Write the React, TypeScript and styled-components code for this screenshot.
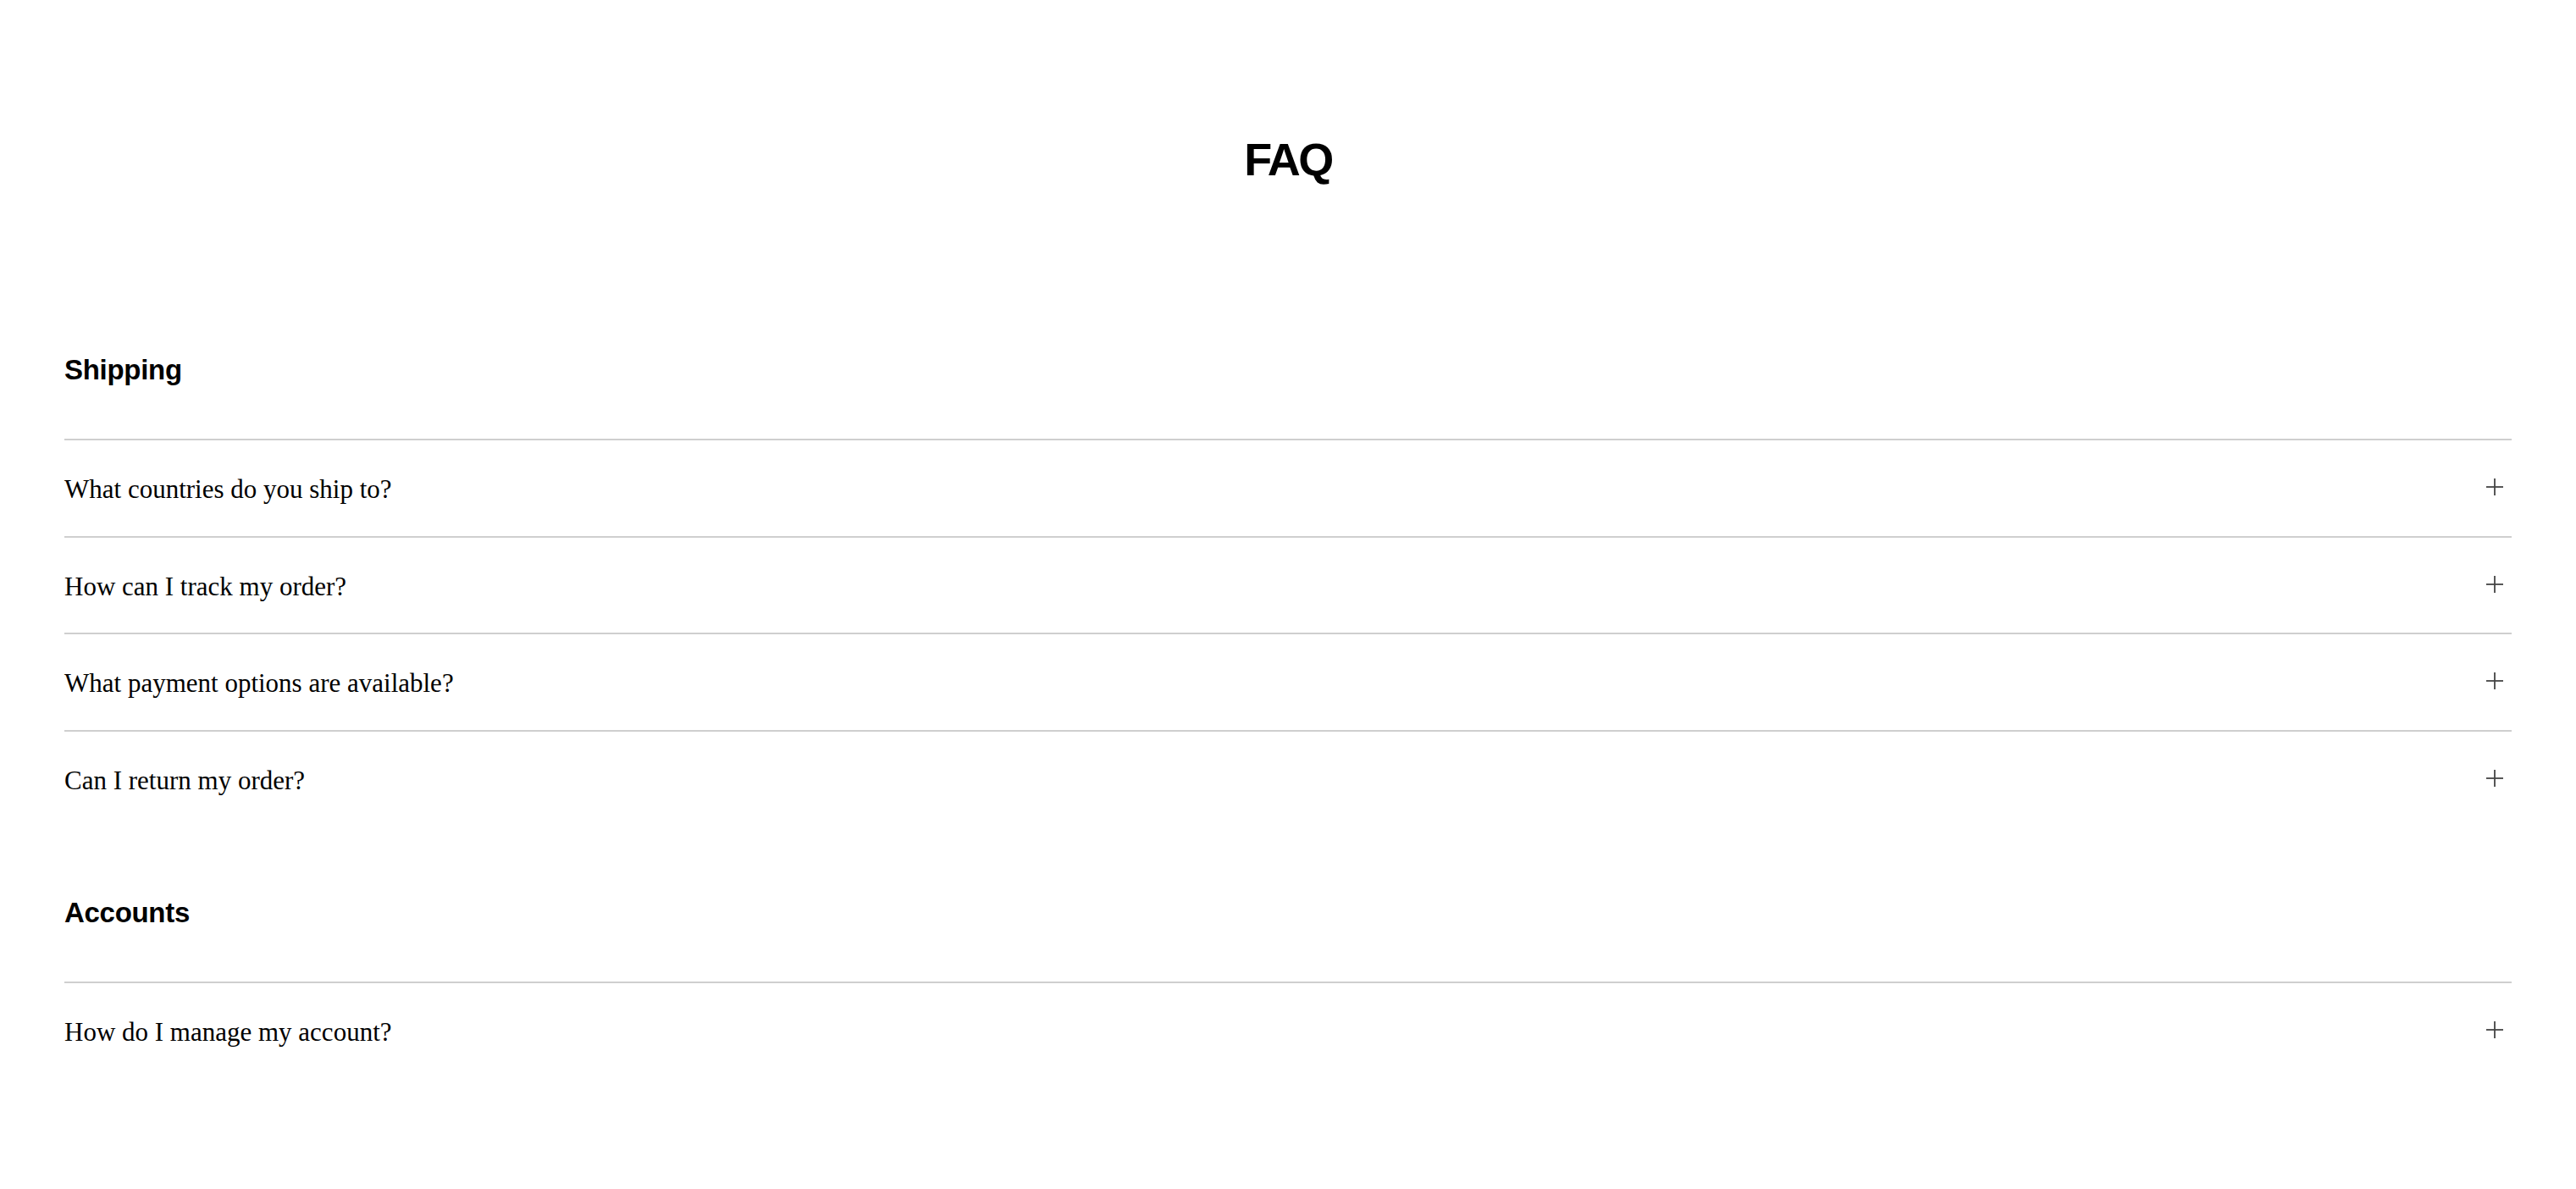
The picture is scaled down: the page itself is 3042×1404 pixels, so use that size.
import React from "react";
import styled, { createGlobalStyle } from "styled-components";

const GlobalStyle = createGlobalStyle`
  html, body {
    margin: 0;
    padding: 0;
    background: #ffffff;
  }
  body {
    font-family: "Liberation Sans", Arial, sans-serif;
    color: #000;
  }
`;

const Page = styled.main`
  padding: 158px 76px 80px;
  box-sizing: border-box;
  width: 100%;
`;

const Title = styled.h1`
  margin: 0 0 200px;
  text-align: center;
  font-family: "Liberation Sans", Arial, sans-serif;
  font-weight: 700;
  font-size: 54px;
  line-height: 60px;
  letter-spacing: -2.5px;
  color: #000;
`;

const Section = styled.section`
  display: flex;
  flex-direction: column;
  & + & {
    margin-top: 83px;
  }
`;

const SectionTitle = styled.h2`
  margin: 0 0 63px;
  font-family: "Liberation Sans", Arial, sans-serif;
  font-weight: 700;
  font-size: 33px;
  line-height: 37px;
  letter-spacing: -0.3px;
  color: #000;
`;

const List = styled.div`
  display: flex;
  flex-direction: column;
`;

const Row = styled.button`
  display: flex;
  align-items: center;
  justify-content: space-between;
  width: 100%;
  height: 114.5px;
  box-sizing: border-box;
  padding: 0;
  margin: 0;
  background: none;
  border: none;
  border-top: 2px solid #cfcfcf;
  cursor: pointer;
  text-align: left;
`;

const Question = styled.span`
  font-family: "Liberation Serif", "Times New Roman", serif;
  font-size: 31px;
  line-height: 36px;
  color: #000;
  padding-top: 4px;
`;

const IconWrap = styled.span`
  display: flex;
  align-items: center;
  justify-content: center;
  width: 40px;
  height: 40px;
  color: #444444;
  margin-top: -2px;
`;

const PlusIcon = () => (
  <svg width="20" height="20" viewBox="0 0 20 20" fill="none" stroke="currentColor" strokeWidth="1.8">
    <line x1="10" y1="0" x2="10" y2="20" />
    <line x1="0" y1="10" x2="20" y2="10" />
  </svg>
);

const sections = [
  {
    title: "Shipping",
    items: [
      "What countries do you ship to?",
      "How can I track my order?",
      "What payment options are available?",
      "Can I return my order?",
    ],
  },
  {
    title: "Accounts",
    items: ["How do I manage my account?"],
  },
];

export default function App() {
  return (
    <>
      <GlobalStyle />
      <Page>
        <Title>FAQ</Title>
        {sections.map((s) => (
          <Section key={s.title}>
            <SectionTitle>{s.title}</SectionTitle>
            <List>
              {s.items.map((q) => (
                <Row key={q} type="button">
                  <Question>{q}</Question>
                  <IconWrap>
                    <PlusIcon />
                  </IconWrap>
                </Row>
              ))}
            </List>
          </Section>
        ))}
      </Page>
    </>
  );
}
